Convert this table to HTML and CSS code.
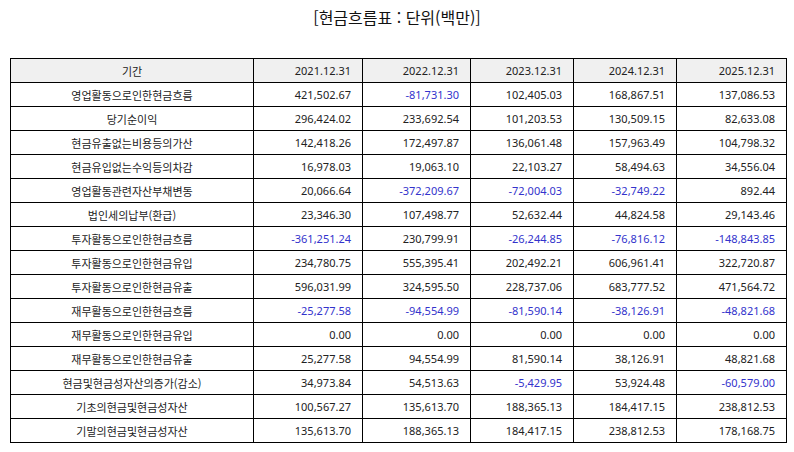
FILE: index.html
```html
<!DOCTYPE html>
<html lang="ko">
<head>
<meta charset="utf-8">
<title>현금흐름표</title>
<link rel="stylesheet" href="styles.css">
</head>
<body>
<div class="title">[현금흐름표 : 단위(백만)]</div>
<table class="cf">
<colgroup>
<col class="c0"><col class="c1"><col class="c2"><col class="c3"><col class="c4"><col class="c5">
</colgroup>
<thead>
<tr><th>기간</th><th>2021.12.31</th><th>2022.12.31</th><th>2023.12.31</th><th>2024.12.31</th><th>2025.12.31</th></tr>
</thead>
<tbody>
<tr><td>영업활동으로인한현금흐름</td><td>421,502.67</td><td class="neg">-81,731.30</td><td>102,405.03</td><td>168,867.51</td><td>137,086.53</td></tr>
<tr><td>당기순이익</td><td>296,424.02</td><td>233,692.54</td><td>101,203.53</td><td>130,509.15</td><td>82,633.08</td></tr>
<tr><td>현금유출없는비용등의가산</td><td>142,418.26</td><td>172,497.87</td><td>136,061.48</td><td>157,963.49</td><td>104,798.32</td></tr>
<tr><td>현금유입없는수익등의차감</td><td>16,978.03</td><td>19,063.10</td><td>22,103.27</td><td>58,494.63</td><td>34,556.04</td></tr>
<tr><td>영업활동관련자산부채변동</td><td>20,066.64</td><td class="neg">-372,209.67</td><td class="neg">-72,004.03</td><td class="neg">-32,749.22</td><td>892.44</td></tr>
<tr><td>법인세의납부(환급)</td><td>23,346.30</td><td>107,498.77</td><td>52,632.44</td><td>44,824.58</td><td>29,143.46</td></tr>
<tr><td>투자활동으로인한현금흐름</td><td class="neg">-361,251.24</td><td>230,799.91</td><td class="neg">-26,244.85</td><td class="neg">-76,816.12</td><td class="neg">-148,843.85</td></tr>
<tr><td>투자활동으로인한현금유입</td><td>234,780.75</td><td>555,395.41</td><td>202,492.21</td><td>606,961.41</td><td>322,720.87</td></tr>
<tr><td>투자활동으로인한현금유출</td><td>596,031.99</td><td>324,595.50</td><td>228,737.06</td><td>683,777.52</td><td>471,564.72</td></tr>
<tr><td>재무활동으로인한현금흐름</td><td class="neg">-25,277.58</td><td class="neg">-94,554.99</td><td class="neg">-81,590.14</td><td class="neg">-38,126.91</td><td class="neg">-48,821.68</td></tr>
<tr><td>재무활동으로인한현금유입</td><td>0.00</td><td>0.00</td><td>0.00</td><td>0.00</td><td>0.00</td></tr>
<tr><td>재무활동으로인한현금유출</td><td>25,277.58</td><td>94,554.99</td><td>81,590.14</td><td>38,126.91</td><td>48,821.68</td></tr>
<tr><td>현금및현금성자산의증가(감소)</td><td>34,973.84</td><td>54,513.63</td><td class="neg">-5,429.95</td><td>53,924.48</td><td class="neg">-60,579.00</td></tr>
<tr><td>기초의현금및현금성자산</td><td>100,567.27</td><td>135,613.70</td><td>188,365.13</td><td>184,417.15</td><td>238,812.53</td></tr>
<tr><td>기말의현금및현금성자산</td><td>135,613.70</td><td>188,365.13</td><td>184,417.15</td><td>238,812.53</td><td>178,168.75</td></tr>
</tbody>
</table>
</body>
</html>
```

FILE: styles.css
```css
html, body {
  margin: 0;
  padding: 0;
  background: #ffffff;
}
body {
  font-family: "Noto Sans", "Noto Sans CJK KR", sans-serif;
  color: #222222;
}
.title {
  text-align: center;
  font-size: 16px;
  line-height: 22px;
  padding-top: 6px;
  height: 58px;
  box-sizing: border-box;
  color: #111111;
  font-family: "Noto Sans CJK KR", sans-serif;
}
.cf {
  margin-left: 10px;
  border-collapse: collapse;
  table-layout: fixed;
  width: 776px;
  font-size: 11px;
}
.c0 { width: 243px; }
.c1 { width: 109px; }
.c2 { width: 108px; }
.c3 { width: 103px; }
.c4 { width: 103px; }
.c5 { width: 110px; }
.cf th, .cf td {
  border: 1px solid #000000;
  height: 23px;
  padding: 0 11px 0 4px;
  line-height: 14px;
  text-align: right;
  font-weight: normal;
  white-space: nowrap;
}
.cf th {
  background: #f0f0f0;
}
.cf th:first-child, .cf td:first-child {
  text-align: center;
  padding: 0 4px;
  font-family: "Noto Sans CJK KR", sans-serif;
}
.cf td.neg {
  color: #3333cc;
}
```
